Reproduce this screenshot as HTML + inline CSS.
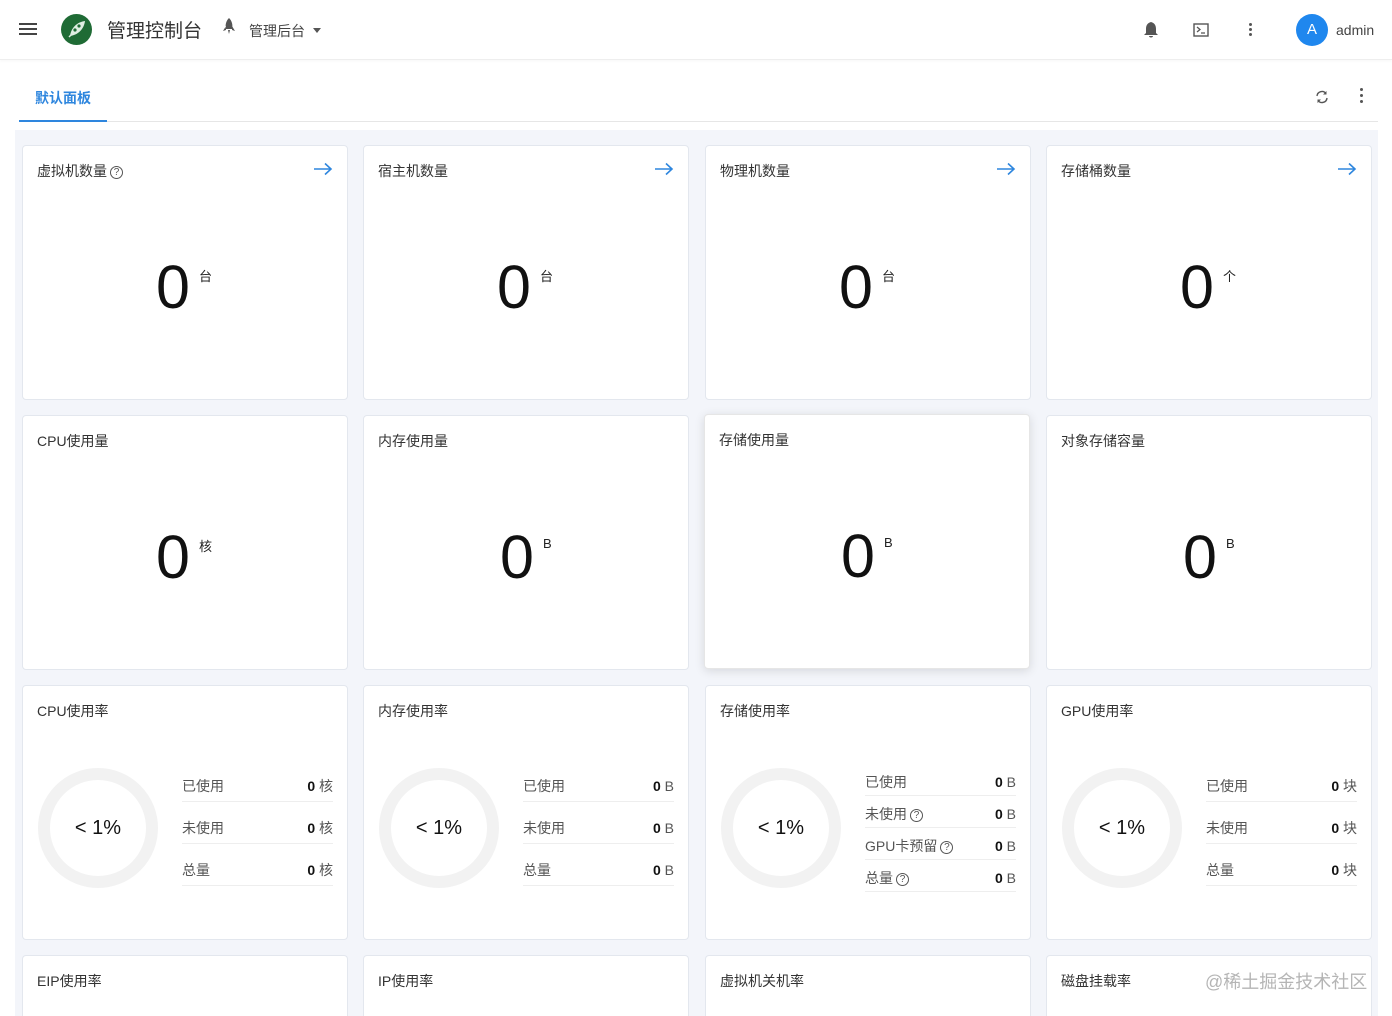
<!DOCTYPE html>
<html style="width:1392px;height:1016px;overflow:hidden"><head><meta charset="utf-8"><style>
*{margin:0;padding:0;box-sizing:border-box}
body{width:1392px;height:1016px;overflow:hidden;background:#fff;font-family:"Liberation Sans","Noto Sans CJK SC",sans-serif;color:#333;position:relative}
.a{position:absolute}
.top{left:0;top:0;width:1392px;height:60px;background:#fff;border-bottom:1px solid #eee;box-shadow:0 1px 3px rgba(0,0,0,.04)}
.bg{left:15px;top:130px;width:1363px;height:886px;background:#f3f5fa}
.card{position:absolute;width:326px;height:255px;background:#fff;border:1px solid #e3e7ee;border-radius:4px;overflow:hidden}
.t{position:absolute;left:14px;top:16px;font-size:14px;color:#333;line-height:18px}
.arr{position:absolute;right:14px;top:16px}
.num{position:absolute;left:130px;top:106px;font-size:61px;line-height:70px;color:#111;width:40px;text-align:center}
.u{position:absolute;left:176px;top:120px;font-size:13px;color:#222}
.q{display:inline-block;width:13px;height:13px;border:1px solid #555;border-radius:50%;font-size:10px;line-height:11px;text-align:center;vertical-align:1px;margin-left:3px;color:#555}
.ring{position:absolute;left:15px;top:82px;width:120px;height:120px;border-radius:50%;border:12px solid #f2f2f2;text-align:center;line-height:96px;font-size:20px;color:#111}
.tb{position:absolute;left:159px;width:151px}
.row{height:42px;border-bottom:1px solid #eee;display:flex;justify-content:space-between;align-items:center;font-size:14px;color:#555;padding-top:10px}
.tb4 .row{height:32px;padding-top:4px}
.row b{color:#111}
</style></head><body>
<div class="a top">
 <div class="a" style="left:19px;top:23px;width:18px;height:2px;background:#444;box-shadow:0 5px 0 #444,0 10px 0 #444"></div>
 <div class="a" style="left:61px;top:14px;width:31px;height:31px;border-radius:50%;background:#1f6b35">
  <svg width="31" height="31" viewBox="0 0 31 31"><path d="M9 22 C10 14 16 8 24 7 C23 15 17 21 9 22Z" fill="#dfeee2"/><circle cx="14" cy="16" r="1.6" fill="#1f6b35"/><circle cx="18" cy="12" r="1.6" fill="#1f6b35"/><path d="M8 23 L12 19" stroke="#dfeee2" stroke-width="1.5"/></svg>
 </div>
 <div class="a" style="left:107px;top:16px;font-size:19px;color:#333">管理控制台</div>
 <svg class="a" style="left:221px;top:17px" width="16" height="20" viewBox="0 0 16 20"><path d="M8 1 C11 4 12 8 11 12 L5 12 C4 8 5 4 8 1Z M5 9 L2 14 L5 13Z M11 9 L14 14 L11 13Z M7 13 L9 13 L8 17Z" fill="#555"/></svg>
 <div class="a" style="left:249px;top:21px;font-size:14px;color:#444">管理后台</div>
 <div class="a" style="left:313px;top:28px;border:4px solid transparent;border-top:5px solid #555"></div>
 <svg class="a" style="left:1143px;top:21px" width="16" height="18" viewBox="0 0 16 18"><path d="M8 1 C4 2 3 5 3 8 L3 12 L1 14 L15 14 L13 12 L13 8 C13 5 12 2 8 1Z M6 15 L10 15 C10 17 6 17 6 15Z" fill="#555"/></svg>
 <svg class="a" style="left:1193px;top:23px" width="16" height="14" viewBox="0 0 16 14"><rect x="1" y="1" width="14" height="12" fill="none" stroke="#555" stroke-width="1.4"/><path d="M4 4 L7 6.5 L4 9 M8 10 L12 10" stroke="#555" stroke-width="1.3" fill="none"/></svg>
 <div class="a" style="left:1249px;top:23px;width:3px;height:3px;border-radius:50%;background:#555;box-shadow:0 5px 0 #555,0 10px 0 #555"></div>
 <div class="a" style="left:1296px;top:14px;width:32px;height:32px;border-radius:50%;background:#1f87ee;color:#fff;text-align:center;line-height:32px;font-size:15px">A</div>
 <div class="a" style="left:1336px;top:22px;font-size:14px;color:#444">admin</div>
</div>
<div class="a" style="left:35px;top:88px;font-size:14px;font-weight:bold;color:#2e86de">默认面板</div>
<div class="a" style="left:19px;top:120px;width:88px;height:2px;background:#2e86de"></div>
<div class="a" style="left:107px;top:121px;width:1271px;height:1px;background:#e6e6e6"></div>
<svg class="a" style="left:1314px;top:89px" width="16" height="16" viewBox="0 0 16 16"><path d="M3 7 A5 5 0 0 1 12 4.5 M13 9 A5 5 0 0 1 4 11.5" stroke="#555" stroke-width="1.4" fill="none"/><path d="M12.5 2 L12.5 5.5 L9 5.5Z M3.5 14 L3.5 10.5 L7 10.5Z" fill="#555"/></svg>
<div class="a" style="left:1360px;top:88px;width:3px;height:3px;border-radius:50%;background:#555;box-shadow:0 6px 0 #555,0 12px 0 #555"></div>
<div class="a bg"></div>

<div class="card" style="left:22px;top:145px"><div class="t">虚拟机数量<span class="q">?</span></div><svg class="arr" width="20" height="14" viewBox="0 0 20 14"><path d="M1 7 L18 7 M12 1.5 L18 7 L12 12.5" stroke="#2e86de" stroke-width="1.6" fill="none"/></svg><div class="num">0</div><div class="u">台</div></div>
<div class="card" style="left:363px;top:145px"><div class="t">宿主机数量</div><svg class="arr" width="20" height="14" viewBox="0 0 20 14"><path d="M1 7 L18 7 M12 1.5 L18 7 L12 12.5" stroke="#2e86de" stroke-width="1.6" fill="none"/></svg><div class="num">0</div><div class="u">台</div></div>
<div class="card" style="left:705px;top:145px"><div class="t">物理机数量</div><svg class="arr" width="20" height="14" viewBox="0 0 20 14"><path d="M1 7 L18 7 M12 1.5 L18 7 L12 12.5" stroke="#2e86de" stroke-width="1.6" fill="none"/></svg><div class="num">0</div><div class="u">台</div></div>
<div class="card" style="left:1046px;top:145px"><div class="t">存储桶数量</div><svg class="arr" width="20" height="14" viewBox="0 0 20 14"><path d="M1 7 L18 7 M12 1.5 L18 7 L12 12.5" stroke="#2e86de" stroke-width="1.6" fill="none"/></svg><div class="num">0</div><div class="u">个</div></div>

<div class="card" style="left:22px;top:415px"><div class="t">CPU使用量</div><div class="num">0</div><div class="u">核</div></div>
<div class="card" style="left:363px;top:415px"><div class="t">内存使用量</div><div class="num" style="left:133px">0</div><div class="u" style="left:179px">B</div></div>
<div class="card" style="left:704px;top:414px;box-shadow:0 2px 10px rgba(0,0,0,.12);border-color:#e6e6e6"><div class="t">存储使用量</div><div class="num" style="left:133px">0</div><div class="u" style="left:179px">B</div></div>
<div class="card" style="left:1046px;top:415px"><div class="t">对象存储容量</div><div class="num" style="left:133px">0</div><div class="u" style="left:179px">B</div></div>

<div class="card" style="left:22px;top:685px"><div class="t">CPU使用率</div><div class="ring">&lt; 1%</div>
<div class="tb" style="top:74px"><div class="row"><span>已使用</span><span><b>0</b> 核</span></div><div class="row"><span>未使用</span><span><b>0</b> 核</span></div><div class="row"><span>总量</span><span><b>0</b> 核</span></div></div></div>
<div class="card" style="left:363px;top:685px"><div class="t">内存使用率</div><div class="ring">&lt; 1%</div>
<div class="tb" style="top:74px"><div class="row"><span>已使用</span><span><b>0</b> B</span></div><div class="row"><span>未使用</span><span><b>0</b> B</span></div><div class="row"><span>总量</span><span><b>0</b> B</span></div></div></div>
<div class="card" style="left:705px;top:685px"><div class="t">存储使用率</div><div class="ring">&lt; 1%</div>
<div class="tb tb4" style="top:78px"><div class="row"><span>已使用</span><span><b>0</b> B</span></div><div class="row"><span>未使用<span class="q">?</span></span><span><b>0</b> B</span></div><div class="row"><span>GPU卡预留<span class="q">?</span></span><span><b>0</b> B</span></div><div class="row"><span>总量<span class="q">?</span></span><span><b>0</b> B</span></div></div></div>
<div class="card" style="left:1046px;top:685px"><div class="t">GPU使用率</div><div class="ring">&lt; 1%</div>
<div class="tb" style="top:74px"><div class="row"><span>已使用</span><span><b>0</b> 块</span></div><div class="row"><span>未使用</span><span><b>0</b> 块</span></div><div class="row"><span>总量</span><span><b>0</b> 块</span></div></div></div>

<div class="card" style="left:22px;top:955px;height:61px;border-bottom:none;border-radius:4px 4px 0 0"><div class="t">EIP使用率</div></div>
<div class="card" style="left:363px;top:955px;height:61px;border-bottom:none;border-radius:4px 4px 0 0"><div class="t">IP使用率</div></div>
<div class="card" style="left:705px;top:955px;height:61px;border-bottom:none;border-radius:4px 4px 0 0"><div class="t">虚拟机关机率</div></div>
<div class="card" style="left:1046px;top:955px;height:61px;border-bottom:none;border-radius:4px 4px 0 0"><div class="t">磁盘挂载率</div></div>
<div class="a" style="left:1205px;top:968px;font-size:18px;color:#b5b5b5">@稀土掘金技术社区</div>
</body></html>
